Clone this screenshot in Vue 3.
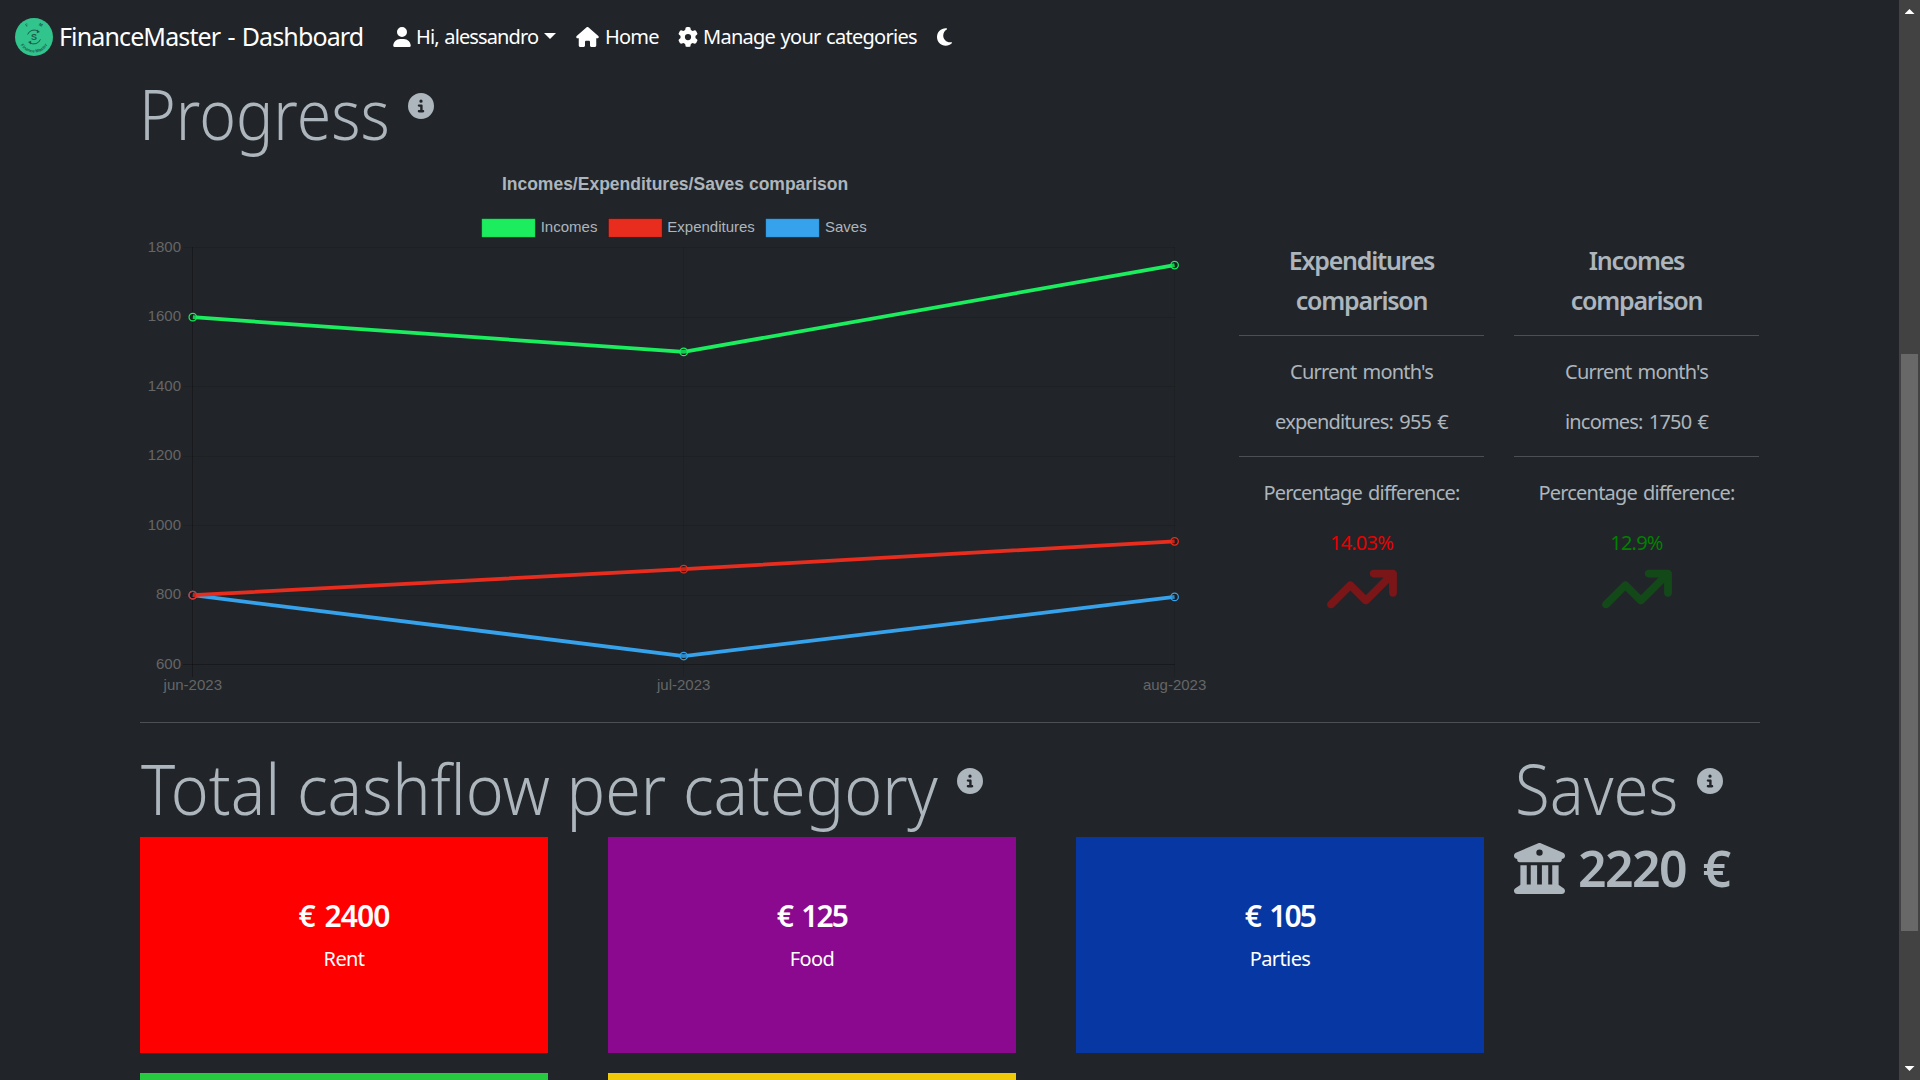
<script setup>
const icons = {
  user: { box: '0 0 448 512', d: 'M224 256A128 128 0 1 0 224 0a128 128 0 1 0 0 256zm-45.7 48C79.8 304 0 383.8 0 482.3C0 498.7 13.3 512 29.7 512H418.3c16.4 0 29.7-13.3 29.7-29.7C448 383.8 368.2 304 269.7 304H178.3z' },
  home: { box: '0 0 576 512', d: 'M575.8 255.5c0 18-15 32.1-32 32.1h-32l.7 160.2c0 2.7-.2 5.4-.5 8.1V472c0 22.1-17.9 40-40 40H456c-1.1 0-2.2 0-3.3-.1c-1.4 .1-2.8 .1-4.2 .1H416 392c-22.1 0-40-17.9-40-40V448 384c0-17.7-14.3-32-32-32H256c-17.7 0-32 14.3-32 32v64 24c0 22.1-17.9 40-40 40H160 128.1c-1.5 0-3-.1-4.5-.2c-1.2 .1-2.4 .2-3.6 .2H104c-22.1 0-40-17.9-40-40V360c0-.9 0-1.9 .1-2.8V287.6H32c-18 0-32-14-32-32.1c0-9 3-17 10-24L266.4 8c7-7 15-8 22-8s15 2 21 7L564.8 231.5c8 7 12 15 11 24z' },
  gear: { box: '0 0 512 512', d: 'M495.9 166.6c3.2 8.7 .5 18.4-6.4 24.6l-43.3 39.4c1.1 8.3 1.7 16.8 1.7 25.4s-.6 17.1-1.7 25.4l43.3 39.4c6.9 6.2 9.6 15.9 6.4 24.6c-4.4 11.9-9.7 23.3-15.8 34.3l-4.7 8.1c-6.6 11-14 21.4-22.1 31.2c-5.9 7.2-15.7 9.6-24.5 6.8l-55.7-17.7c-13.4 10.3-28.2 18.9-44 25.4l-12.5 57.1c-2 9.1-9 16.3-18.2 17.8c-13.8 2.3-28 3.5-42.5 3.5s-28.7-1.2-42.5-3.5c-9.2-1.5-16.2-8.7-18.2-17.8l-12.5-57.1c-15.8-6.5-30.6-15.1-44-25.4L83.1 425.9c-8.8 2.8-18.6 .3-24.5-6.8c-8.1-9.8-15.5-20.2-22.1-31.2l-4.7-8.1c-6.1-11-11.4-22.4-15.8-34.3c-3.2-8.7-.5-18.4 6.4-24.6l43.3-39.4C64.6 273.1 64 264.6 64 256s.6-17.1 1.7-25.4L22.4 191.2c-6.9-6.2-9.6-15.9-6.4-24.6c4.4-11.9 9.7-23.3 15.8-34.3l4.7-8.1c6.6-11 14-21.4 22.1-31.2c5.9-7.2 15.7-9.6 24.5-6.8l55.7 17.7c13.4-10.3 28.2-18.9 44-25.4l12.5-57.1c2-9.1 9-16.3 18.2-17.8C227.3 1.2 241.5 0 256 0s28.7 1.2 42.5 3.5c9.2 1.5 16.2 8.7 18.2 17.8l12.5 57.1c15.8 6.5 30.6 15.1 44 25.4l55.7-17.7c8.8-2.8 18.6-.3 24.5 6.8c8.1 9.8 15.5 20.2 22.1 31.2l4.7 8.1c6.1 11 11.4 22.4 15.8 34.3zM256 336a80 80 0 1 0 0-160 80 80 0 1 0 0 160z' },
  moon: { box: '0 0 384 512', d: 'M223.5 32C100 32 0 132.3 0 256S100 480 223.5 480c60.6 0 115.5-24.2 155.8-63.4c5-4.9 6.3-12.5 3.1-18.7s-10.1-9.7-17-8.5c-9.8 1.7-19.8 2.6-30.1 2.6c-96.9 0-175.5-78.8-175.5-176c0-65.8 36-123.1 89.3-153.3c6.1-3.5 9.2-10.5 7.7-17.3s-7.3-11.9-14.3-12.5c-6.3-.5-12.6-.8-19-.8z' },
  info: { box: '0 0 512 512', d: 'M256 512A256 256 0 1 0 256 0a256 256 0 1 0 0 512zM216 336h24V272H216c-13.3 0-24-10.7-24-24s10.7-24 24-24h48c13.3 0 24 10.7 24 24v88h8c13.3 0 24 10.7 24 24s-10.7 24-24 24H216c-13.3 0-24-10.7-24-24s10.7-24 24-24zm40-208a32 32 0 1 1 0 64 32 32 0 1 1 0-64z' },
  bank: { box: '0 0 512 512', d: 'M243.4 2.6l-224 96c-14 6-21.8 21-18.7 35.8S16.8 160 32 160v8c0 13.3 10.7 24 24 24H456c13.3 0 24-10.7 24-24v-8c15.2 0 28.3-10.7 31.3-25.6s-4.8-29.9-18.7-35.8l-224-96c-8-3.4-17.2-3.4-25.2 0zM128 224H64V420.3c-.6 .3-1.2 .7-1.8 1.1l-48 32c-11.7 7.8-17 22.4-12.9 35.9S17.9 512 32 512H480c14.1 0 26.5-9.2 30.6-22.7s-1.1-28.1-12.9-35.9l-48-32c-.6-.4-1.2-.7-1.8-1.1V224H384V416H344V224H280V416H232V224H168V416H128V224zM256 64a32 32 0 1 1 0 64 32 32 0 1 1 0-64z' },
  trend: { box: '0 0 576 512', d: 'M384 160c-17.7 0-32-14.3-32-32s14.3-32 32-32H544c17.7 0 32 14.3 32 32V288c0 17.7-14.3 32-32 32s-32-14.3-32-32V205.3L342.6 374.6c-12.5 12.5-32.8 12.5-45.3 0L192 269.3 54.6 406.6c-12.5 12.5-32.8 12.5-45.3 0s-12.5-32.8 0-45.3l160-160c12.5-12.5 32.8-12.5 45.3 0L320 306.7 466.7 160H384z' },
}

const xs = [192.8, 683.7, 1174.6]
const yOf = (v) => 664.7 - ((v - 600) / 200) * 69.5
const ticks = [1800, 1600, 1400, 1200, 1000, 800, 600]
const months = ['jun-2023', 'jul-2023', 'aug-2023']
const series = [
  { name: 'Saves', color: '#36a2eb', values: [800, 625, 795], box: 765.6, label: 825 },
  { name: 'Expenditures', color: '#e82d1f', values: [800, 875, 955], box: 608.4, label: 667.3 },
  { name: 'Incomes', color: '#1ced5f', values: [1600, 1500, 1750], box: 481.6, label: 540.7 },
]
const points = (s) => s.values.map((v, i) => `${xs[i]},${yOf(v)}`).join(' ')

const stats = [
  { first: 'Expenditures', lines: ["Current month's", 'expenditures: 955 €'], pct: '14.03%', tone: 'bad' },
  { first: 'Incomes', lines: ["Current month's", 'incomes: 1750 €'], pct: '12.9%', tone: 'good' },
]
const cards = [
  { amount: '€ 2400', name: 'Rent', tone: 'rent' },
  { amount: '€ 125', name: 'Food', tone: 'food' },
  { amount: '€ 105', name: 'Parties', tone: 'parties' },
  { tone: 'green' },
  { tone: 'yellow' },
]
</script>

<template>
  <div class="page">
    <div class="content">
      <nav class="navbar">
        <svg class="logo" viewBox="0 0 38 38">
          <defs>
            <path id="arc-bottom" d="M3.4 19A15.6 15.6 0 0 0 34.6 19" />
            <path id="arc-top" d="M6.5 19A12.5 12.5 0 0 1 31.5 19" />
          </defs>
          <circle cx="19" cy="19" r="19" fill="#32c48d" />
          <path d="M12.6 16.5A7 7 0 0 1 23 13.2M25.4 21.4A7 7 0 0 1 15 24.8" fill="none" stroke="#1f5a4a" stroke-width="1" />
          <path d="M22 11.6l3 2.4-3.2 1.3zM16 26.4l-3-2.4 3.2-1.3z" fill="#1f5a4a" />
          <text x="19" y="22" text-anchor="middle" class="logo-s">S</text>
          <text class="logo-t"><textPath href="#arc-bottom" startOffset="50%" text-anchor="middle">Finance Master</textPath></text>
          <text class="logo-t"><textPath href="#arc-top" startOffset="33%" text-anchor="middle">F</textPath></text>
          <text class="logo-t"><textPath href="#arc-top" startOffset="66%" text-anchor="middle">M</textPath></text>
        </svg>
        <span class="brand">FinanceMaster - Dashboard</span>
        <a class="link user"><svg :viewBox="icons.user.box"><path :d="icons.user.d" /></svg><span>Hi, alessandro</span><i class="caret"></i></a>
        <a class="link home"><svg :viewBox="icons.home.box"><path :d="icons.home.d" /></svg><span>Home</span></a>
        <a class="link manage"><svg :viewBox="icons.gear.box"><path :d="icons.gear.d" /></svg><span>Manage your categories</span></a>
        <a class="link moon"><svg :viewBox="icons.moon.box"><path :d="icons.moon.d" /></svg></a>
      </nav>

      <main class="container">
        <h1 class="display">
          <span class="t-progress">Progress</span>
          <svg class="info" :viewBox="icons.info.box"><path :d="icons.info.d" /></svg>
        </h1>

        <section class="progress">
          <svg class="chart" viewBox="140 154 1070 548">
            <g class="grid">
              <line v-for="t in ticks" :key="t" x1="183" x2="1175" :y1="Math.floor(yOf(t)) + 0.5" :y2="Math.floor(yOf(t)) + 0.5" :class="{ axis: t === 600 }" />
              <line v-for="(x, i) in xs" :key="x" :x1="Math.floor(x) + 0.5" :x2="Math.floor(x) + 0.5" y1="247" y2="677" :class="{ axis: i === 0 }" />
            </g>
            <text class="title" x="675" y="190">Incomes/Expenditures/Saves comparison</text>
            <g v-for="s in series" :key="s.name">
              <rect :x="s.box" y="218.6" width="53.8" height="18.8" :fill="s.color" stroke="#000" stroke-opacity="0.35" stroke-width="1" />
              <text class="legend" :x="s.label" y="232">{{ s.name }}</text>
            </g>
            <text v-for="t in ticks" :key="t" class="tick end" x="181" :y="yOf(t) + 4">{{ t }}</text>
            <text v-for="(m, i) in months" :key="m" class="tick mid" :x="xs[i]" y="690">{{ m }}</text>
            <g v-for="s in series" :key="s.name" :stroke="s.color">
              <polyline :points="points(s)" fill="none" stroke-width="3.75" />
              <circle v-for="(v, i) in s.values" :key="i" :cx="xs[i]" :cy="yOf(v)" r="3.75" fill="#000" fill-opacity="0.15" stroke-width="1.25" />
            </g>
          </svg>

          <div v-for="s in stats" :key="s.first" class="stat">
            <h2>{{ s.first }}<br />comparison</h2>
            <hr class="rule first" />
            <p>{{ s.lines[0] }}<br />{{ s.lines[1] }}</p>
            <hr class="rule" />
            <p>Percentage difference:<br /><span :class="s.tone">{{ s.pct }}</span></p>
            <svg class="trend" :class="s.tone" :viewBox="icons.trend.box"><path :d="icons.trend.d" /></svg>
          </div>
        </section>

        <hr class="divider" />

        <section class="bottom">
          <div class="cashflow">
            <h1 class="display">
              <span class="t-total">Total cashflow per category</span>
              <svg class="info" :viewBox="icons.info.box"><path :d="icons.info.d" /></svg>
            </h1>
            <div class="cards">
              <div v-for="c in cards" :key="c.tone" class="card" :class="c.tone">
                <strong>{{ c.amount }}</strong>
                <span>{{ c.name }}</span>
              </div>
            </div>
          </div>
          <div class="saves">
            <h1 class="display">
              <span class="t-saves">Saves</span>
              <svg class="info" :viewBox="icons.info.box"><path :d="icons.info.d" /></svg>
            </h1>
            <div class="total">
              <svg :viewBox="icons.bank.box"><path :d="icons.bank.d" /></svg>
              <strong>2220 €</strong>
            </div>
          </div>
        </section>
      </main>
    </div>

    <div class="scrollbar">
      <i class="up"></i>
      <div class="track"><div class="thumb"></div></div>
      <i class="down"></i>
    </div>
  </div>
</template>

<style>
body { margin: 0; background: #212529; overflow: hidden; }
</style>

<style scoped>
* { box-sizing: border-box; }
.page {
  display: flex;
  width: 1920px;
  height: 1080px;
  overflow: hidden;
  background: #212529;
  color: #adb5bd;
  font: 400 20px "Noto Sans", "Open Sans", sans-serif;
}
.content { width: 1899px; height: 1080px; overflow: hidden; }
svg { display: block; fill: currentColor; flex: none; }

.navbar { display: flex; align-items: center; height: 70px; padding: 2px 0 0 15px; color: #fff; white-space: nowrap; }
.logo { width: 38px; height: 38px; margin-top: 2px; }
.logo-s { font: 700 9px "Liberation Sans", sans-serif; fill: #1f5a4a; }
.logo-t { font: 700 4.4px "Liberation Sans", sans-serif; fill: #1f5a4a; }
.brand { width: 337.5px; padding-left: 6px; font-size: 25px; letter-spacing: -0.87px; word-spacing: 1.5px; }
.link { display: flex; align-items: center; }
.link svg { height: 20px; margin-top: 2px; }
.user { width: 183px; margin-left: 2px; letter-spacing: -0.88px; word-spacing: 1.3px; }
.user svg { width: 18px; }
.user span { margin-left: 5.5px; }
.caret { margin: -1px 0 0 6px; border: 6px solid transparent; border-top-color: #fff; border-bottom: 0; }
.home { width: 102px; margin-left: 0.5px; letter-spacing: -0.8px; }
.home svg { width: 23px; }
.home span { margin-left: 6px; }
.manage { width: 257.5px; letter-spacing: -0.73px; word-spacing: 1px; }
.manage svg { width: 20px; }
.manage span { margin-left: 5px; }
.moon svg { width: 17px; margin-top: 1px; }

.container { width: 1620px; margin: 0 0 0 140px; }
.display { display: flex; height: 84px; margin: 0; font-size: 70px; font-weight: 300; line-height: 86px; white-space: nowrap; }
.display span { transform-origin: 0 50%; }
.t-progress { width: 268px; margin-left: -1px; margin-right: 1px; transform: scaleX(0.892); }
.t-total { width: 816px; margin-left: 1px; transform: scaleX(0.9205); }
.t-saves { width: 182px; margin-left: 1px; transform: scaleX(0.907); }
.info { width: 26px; height: 26px; margin-top: 23px; }

.progress { display: flex; height: 548px; }
.chart { width: 1070px; height: 548px; margin-right: 29px; font-family: "Liberation Sans", Arial, sans-serif; }
.grid line { stroke: #000; stroke-opacity: 0.1; stroke-width: 1; }
.grid .axis { stroke-opacity: 0.3; }
.title { font-size: 17.5px; font-weight: 700; text-anchor: middle; }
.legend, .tick { font-size: 15px; }
.tick { fill: #666; }
.end { text-anchor: end; }
.mid { text-anchor: middle; }

.stat { width: 245px; margin-right: 30px; padding-top: 86px; text-align: center; flex: none; }
.stat:last-child { margin-right: 0; }
.stat h2 { margin: 0; font-size: 25px; font-weight: 600; line-height: 40px; letter-spacing: -1.25px; }
.stat p { margin: 0 0 -1px; padding-top: 1px; line-height: 50px; letter-spacing: -0.8px; word-spacing: 1.7px; }
.rule, .divider { height: 1px; margin: 10px 0; border: 0; background: #4b5055; }
.rule.first { margin-top: 15px; }
.bad { color: #f00; }
.good { color: #008000; }
.stat p .bad { color: #e80000; }
.trend { width: 70px; height: 62px; margin: -10px auto 0; opacity: 0.4; }
.divider { margin: 20px 0 22px; }

.bottom { display: flex; gap: 30px; }
.cashflow { width: 1344px; }
.cards { display: grid; grid-template-columns: repeat(3, 408px); gap: 20px 60px; margin-top: 8px; }
.card { display: flex; flex-direction: column; align-items: center; height: 216px; padding-top: 61px; color: #fff; }
.card strong { font-size: 30px; font-weight: 600; line-height: 36px; letter-spacing: -0.9px; word-spacing: 3px; }
.card.food strong, .card.parties strong { letter-spacing: -1.8px; }
.card span { margin-top: 10px; line-height: 30px; letter-spacing: -0.6px; }
.rent { background: #f00; }
.food { background: #8a098f; }
.parties { background: #0637a3; }
.green { background: #26c940; }
.yellow { background: #f0c908; }
.total { display: flex; align-items: center; margin-top: 9px; height: 60px; }
.total svg { width: 51px; height: 51px; }
.total strong { margin-left: 13px; font-size: 50px; font-weight: 600; line-height: 60px; letter-spacing: -1.6px; word-spacing: 5px; white-space: nowrap; }

.scrollbar { display: flex; flex-direction: column; align-items: center; width: 21px; height: 1080px; background: #424242; }
.track { flex: 1; width: 17px; padding-top: 333px; }
.thumb { height: 577px; background: #686868; }
.up, .down { width: 10px; height: 5px; background: #fff; }
.up { margin: 9px 0 7px; clip-path: polygon(50% 0, 100% 100%, 0 100%); }
.down { margin: 7px 0 9px; clip-path: polygon(0 0, 100% 0, 50% 100%); }
</style>
